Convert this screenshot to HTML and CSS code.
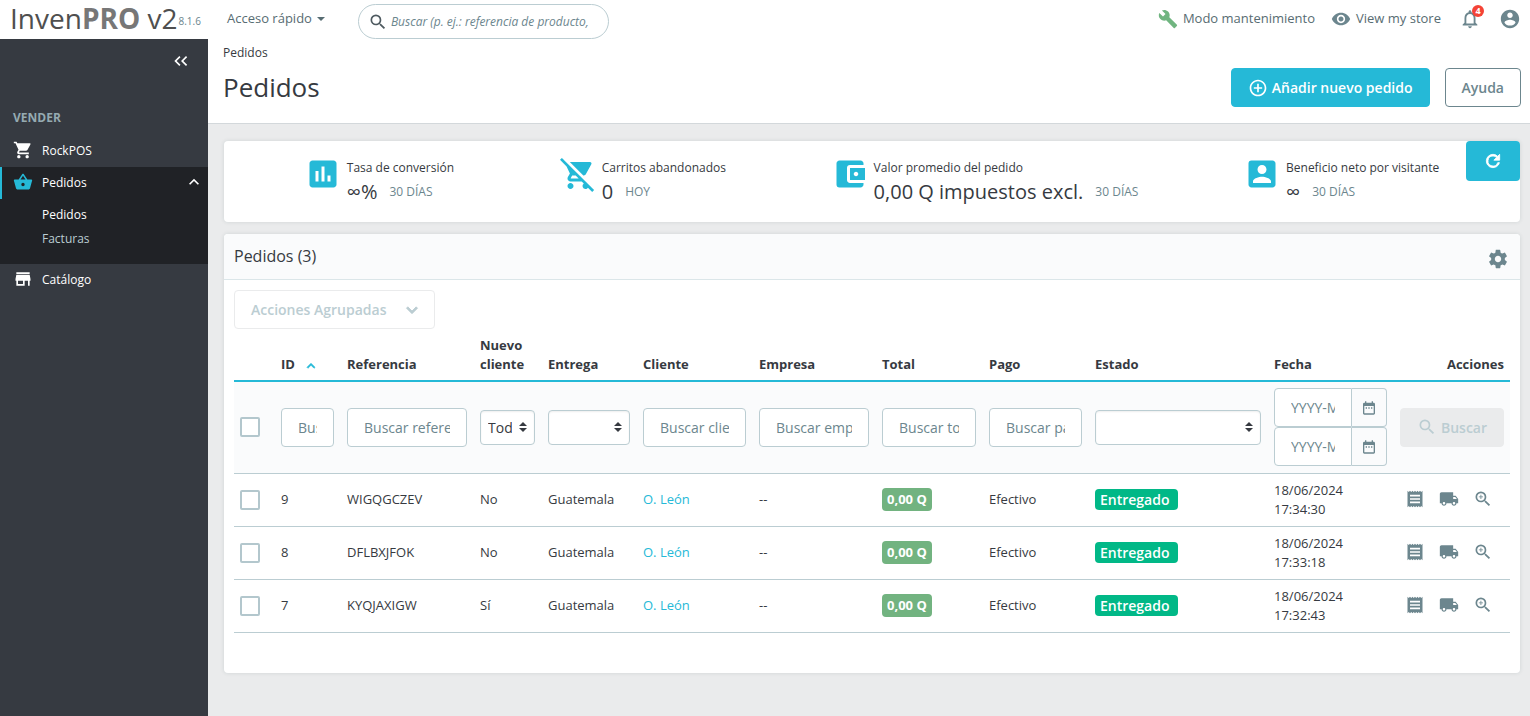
FILE: index.html
```html
<!DOCTYPE html>
<html lang="es">
<head>
<meta charset="utf-8">
<title>Pedidos - InvenPRO v2</title>
<link rel="stylesheet" href="styles.css">
</head>
<body>
<svg class="sprite" aria-hidden="true">
  <symbol id="i-search" viewBox="0 0 24 24"><path d="M15.5 14h-.79l-.28-.27A6.47 6.47 0 0 0 16 9.5 6.5 6.5 0 1 0 9.5 16c1.61 0 3.09-.59 4.23-1.57l.27.28v.79l5 4.99L20.490 19l-4.990-5zm-6 0C7.010 14 5 11.990 5 9.500S7.010 5 9.500 5 14 7.010 14 9.500 11.990 14 9.500 14z"/></symbol>
  <symbol id="i-build" viewBox="0 0 24 24"><path d="M22.700 19l-9.100-9.100c.9-2.300.4-5-1.500-6.900-2-2-5-2.400-7.400-1.300L9 6 6 9 1.600 4.700C.4 7.100.9 10.100 2.900 12.100c1.900 1.900 4.600 2.400 6.900 1.500l9.100 9.100c.4.4 1 .4 1.400 0l2.300-2.300c.5-.4.5-1.100.1-1.400z"/></symbol>
  <symbol id="i-eye" viewBox="0 0 24 24"><path d="M12 4.500C7 4.500 2.730 7.610 1 12c1.730 4.390 6 7.500 11 7.500s9.270-3.110 11-7.500c-1.730-4.390-6-7.500-11-7.500zM12 17c-2.760 0-5-2.240-5-5s2.240-5 5-5 5 2.240 5 5-2.240 5-5 5zm0-8c-1.660 0-3 1.340-3 3s1.340 3 3 3 3-1.340 3-3-1.340-3-3-3z"/></symbol>
  <symbol id="i-bell" viewBox="0 0 24 24"><path d="M12 22c1.100 0 2-.9 2-2h-4c0 1.100.9 2 2 2zm6-6v-5c0-3.070-1.630-5.640-4.500-6.320V4c0-.83-.67-1.500-1.500-1.500s-1.500.67-1.500 1.500v.68C7.640 5.360 6 7.920 6 11v5l-2 2v1h16v-1l-2-2zm-2 1H8v-6c0-2.480 1.510-4.500 4-4.500s4 2.020 4 4.500v6z"/></symbol>
  <symbol id="i-account" viewBox="0 0 24 24"><path d="M12 2C6.480 2 2 6.480 2 12s4.480 10 10 10 10-4.480 10-10S17.520 2 12 2zm0 3c1.660 0 3 1.340 3 3s-1.340 3-3 3-3-1.340-3-3 1.340-3 3-3zm0 14.200c-2.500 0-4.710-1.280-6-3.220.03-1.990 4-3.080 6-3.080 1.990 0 5.970 1.090 6 3.080-1.290 1.940-3.500 3.220-6 3.220z"/></symbol>
  <symbol id="i-cart" viewBox="0 0 24 24"><path d="M7 18c-1.100 0-1.990.9-1.990 2S5.900 22 7 22s2-.9 2-2-.9-2-2-2zM1 2v2h2l3.600 7.590-1.350 2.450c-.16.28-.25.61-.25.96 0 1.100.9 2 2 2h12v-2H7.420c-.14 0-.25-.11-.25-.25l.03-.12.9-1.630h7.450c.75 0 1.410-.41 1.750-1.030l3.580-6.490A1 1 0 0 0 20 4H5.210l-.94-2H1zm16 16c-1.100 0-1.990.9-1.990 2s.89 2 1.990 2 2-.9 2-2-.9-2-2-2z"/></symbol>
  <symbol id="i-basket" viewBox="0 0 24 24"><path d="M17.210 9l-4.380-6.560c-.19-.28-.51-.42-.83-.42s-.64.14-.83.430L6.790 9H2c-.55 0-1 .45-1 1 0 .09.01.18.04.27l2.540 9.270c.23.840 1 1.460 1.920 1.460h13c.92 0 1.690-.62 1.930-1.460l2.540-9.270L23 10c0-.55-.45-1-1-1h-4.790zM9 9l3-4.400L15 9H9zm3 8c-1.100 0-2-.9-2-2s.9-2 2-2 2 .9 2 2-.9 2-2 2z"/></symbol>
  <symbol id="i-store" viewBox="0 0 24 24"><path d="M20 4H4v2h16V4zm1 10v-2l-1-5H4l-1 5v2h1v6h10v-6h4v6h2v-6h1zm-9 4H6v-4h6v4z"/></symbol>
  <symbol id="i-up" viewBox="0 0 24 24"><path d="M7.410 15.410L12 10.830l4.590 4.580L18 14l-6-6-6 6z"/></symbol>
  <symbol id="i-down" viewBox="0 0 24 24"><path d="M7.410 8.590L12 13.170l4.590-4.580L18 10l-6 6-6-6z"/></symbol>
  <symbol id="i-collapse" viewBox="0 0 24 24"><path d="M11.400 7.400L10 6l-6 6 6 6 1.400-1.400L6.800 12zM19.400 7.400L18 6l-6 6 6 6 1.400-1.400-4.600-4.600z"/></symbol>
  <symbol id="i-add" viewBox="0 0 24 24"><path d="M13 7h-2v4H7v2h4v4h2v-4h4v-2h-4V7zm-1-5C6.480 2 2 6.480 2 12s4.480 10 10 10 10-4.480 10-10S17.520 2 12 2zm0 18c-4.410 0-8-3.590-8-8s3.590-8 8-8 8 3.590 8 8-3.590 8-8 8z"/></symbol>
  <symbol id="i-chart" viewBox="0 0 24 24"><path d="M19 3H5c-1.100 0-2 .9-2 2v14c0 1.100.9 2 2 2h14c1.100 0 2-.9 2-2V5c0-1.100-.9-2-2-2zM9 17H7v-7h2v7zm4 0h-2V7h2v10zm4 0h-2v-4h2v4z"/></symbol>
  <symbol id="i-cartoff" viewBox="0 0 24 24"><path d="M22.730 22.730L2.770 2.770 2 2l-.73-.73L0 2.540l4.390 4.390 2.210 4.660-1.350 2.450c-.16.28-.25.61-.25.96 0 1.100.9 2 2 2h7.460l1.380 1.380A2 2 0 0 0 17 22c.67 0 1.260-.33 1.620-.84L21.460 24l1.270-1.270zM7.420 15c-.14 0-.25-.11-.25-.25l.03-.12.9-1.630h2.360l2 2H7.420zm8.130-2c.75 0 1.410-.41 1.750-1.030l3.580-6.490A1 1 0 0 0 20 4H6.540l9.010 9zM7 18c-1.100 0-1.990.9-1.990 2S5.900 22 7 22s2-.9 2-2-.9-2-2-2z"/></symbol>
  <symbol id="i-wallet" viewBox="0 0 24 24"><path d="M21 18v1c0 1.100-.9 2-2 2H5a2 2 0 0 1-2-2V5c0-1.100.89-2 2-2h14c1.100 0 2 .9 2 2v1h-9a2 2 0 0 0-2 2v8c0 1.100.89 2 2 2h9zm-9-2h10V8H12v8zm4-2.500c-.83 0-1.500-.67-1.500-1.500s.67-1.500 1.500-1.500 1.500.67 1.500 1.500-.67 1.500-1.500 1.500z"/></symbol>
  <symbol id="i-person" viewBox="0 0 24 24"><path d="M3 5v14c0 1.100.89 2 2 2h14c1.100 0 2-.9 2-2V5c0-1.100-.9-2-2-2H5a2 2 0 0 0-2 2zm12 4c0 1.660-1.340 3-3 3s-3-1.340-3-3 1.340-3 3-3 3 1.340 3 3zm-9 8c0-2 4-3.100 6-3.100s6 1.100 6 3.100v1H6v-1z"/></symbol>
  <symbol id="i-refresh" viewBox="0 0 24 24"><path d="M17.650 6.350A7.960 7.960 0 0 0 12 4a8 8 0 1 0 7.730 10h-2.080A6 6 0 1 1 12 6c1.660 0 3.140.69 4.220 1.780L13 11h7V4l-2.350 2.350z"/></symbol>
  <symbol id="i-gear" viewBox="0 0 24 24"><path d="M19.430 12.980c.04-.32.07-.64.07-.98s-.03-.66-.07-.98l2.110-1.650c.19-.15.24-.42.12-.64l-2-3.460c-.12-.22-.39-.3-.61-.22l-2.490 1c-.52-.4-1.080-.73-1.690-.98l-.38-2.650A.49.49 0 0 0 14 2h-4c-.25 0-.46.18-.49.42l-.38 2.650c-.61.25-1.170.59-1.690.98l-2.490-1c-.23-.09-.49 0-.61.22l-2 3.460c-.13.22-.07.49.12.64l2.110 1.650c-.04.32-.07.65-.07.98s.03.66.07.98l-2.110 1.650c-.19.15-.24.42-.12.64l2 3.460c.12.22.39.3.61.22l2.490-1c.52.4 1.080.73 1.690.98l.38 2.650c.03.24.24.42.49.42h4c.25 0 .46-.18.49-.42l.38-2.650c.61-.25 1.170-.59 1.690-.98l2.490 1c.23.09.49 0 .61-.22l2-3.460c.12-.22.07-.49-.12-.64l-2.110-1.650zM12 15.500c-1.930 0-3.500-1.570-3.500-3.500s1.570-3.500 3.500-3.500 3.500 1.570 3.500 3.500-1.570 3.500-3.500 3.500z"/></symbol>
  <symbol id="i-calendar" viewBox="0 0 24 24"><path d="M9 11H7v2h2v-2zm4 0h-2v2h2v-2zm4 0h-2v2h2v-2zm2-7h-1V2h-2v2H8V2H6v2H5a2 2 0 0 0-2 2v14c0 1.100.89 2 2 2h14c1.100 0 2-.9 2-2V6c0-1.100-.9-2-2-2zm0 16H5V9h14v11z"/></symbol>
  <symbol id="i-receipt" viewBox="0 0 24 24"><path d="M18 17H6v-2h12v2zm0-4H6v-2h12v2zm0-4H6V7h12v2zM3 22l1.500-1.500L6 22l1.500-1.500L9 22l1.500-1.500L12 22l1.500-1.500L15 22l1.500-1.500L18 22l1.500-1.500L21 22V2l-1.500 1.500L18 2l-1.500 1.500L15 2l-1.500 1.500L12 2l-1.500 1.500L9 2 7.500 3.500 6 2 4.500 3.500 3 2v20z"/></symbol>
  <symbol id="i-truck" viewBox="0 0 24 24"><path d="M20 8h-3V4H3c-1.100 0-2 .9-2 2v11h2c0 1.660 1.340 3 3 3s3-1.340 3-3h6c0 1.660 1.340 3 3 3s3-1.340 3-3h2v-5l-3-4zM6 18.500c-.83 0-1.500-.67-1.500-1.500s.67-1.500 1.500-1.500 1.500.67 1.500 1.500-.67 1.500-1.500 1.500zm13.500-9l1.960 2.500H17V9.500h2.500zm-1.500 9c-.83 0-1.500-.67-1.500-1.500s.67-1.500 1.500-1.500 1.500.67 1.500 1.500-.67 1.500-1.500 1.500z"/></symbol>
  <symbol id="i-zoom" viewBox="0 0 24 24"><path d="M15.500 14h-.79l-.28-.27A6.470 6.470 0 0 0 16 9.500 6.500 6.500 0 1 0 9.500 16c1.610 0 3.090-.59 4.230-1.570l.27.28v.79l5 4.990L20.490 19l-4.990-5zm-6 0C7.010 14 5 11.990 5 9.500S7.010 5 9.500 5 14 7.010 14 9.500 11.990 14 9.500 14zM12 10h-2v2H9v-2H7V9h2V7h1v2h2v1z"/></symbol>
</svg>

<header class="topbar">
  <div class="brand">
    <a class="logo" href="#">Inven<b>PRO</b> v2</a>
    <span class="version">8.1.6</span>
  </div>
  <button class="quick" type="button">Acceso rápido<span class="caret"></span></button>
  <form class="search" role="search">
    <svg class="icon icon-20"><use href="#i-search"/></svg>
    <input type="text" aria-label="Buscar" placeholder="Buscar (p. ej.: referencia de producto,">
  </form>
  <nav class="tools">
    <a class="tool maintenance" href="#"><svg class="icon icon-20"><use href="#i-build"/></svg>Modo mantenimiento</a>
    <a class="tool" href="#"><svg class="icon icon-20"><use href="#i-eye"/></svg>View my store</a>
    <button class="bell" type="button" aria-label="Notificaciones"><svg class="icon icon-22"><use href="#i-bell"/></svg><span class="count">4</span></button>
    <button class="account" type="button" aria-label="Cuenta"><svg class="icon icon-22"><use href="#i-account"/></svg></button>
  </nav>
</header>

<div class="shell">
  <nav class="sidebar">
    <button class="collapse" type="button" aria-label="Contraer menú"><svg class="icon icon-20"><use href="#i-collapse"/></svg></button>
    <h2 class="section">VENDER</h2>
    <a class="item" href="#"><svg class="icon icon-20"><use href="#i-cart"/></svg>RockPOS</a>
    <div class="group">
      <a class="item active" href="#"><svg class="icon icon-20"><use href="#i-basket"/></svg>Pedidos<svg class="icon icon-20 chevron"><use href="#i-up"/></svg></a>
      <a class="sub current" href="#">Pedidos</a>
      <a class="sub" href="#">Facturas</a>
    </div>
    <a class="item" href="#"><svg class="icon icon-20"><use href="#i-store"/></svg>Catálogo</a>
  </nav>

  <main class="main">
    <header class="page-head">
      <div>
        <a class="crumb" href="#">Pedidos</a>
        <h1 class="title">Pedidos</h1>
      </div>
      <div class="page-actions">
        <button class="btn primary" type="button"><svg class="icon icon-20"><use href="#i-add"/></svg>Añadir nuevo pedido</button>
        <button class="btn outline" type="button">Ayuda</button>
      </div>
    </header>

    <div class="content">
      <section class="card kpis">
        <div class="kpi"><svg class="icon icon-36"><use href="#i-chart"/></svg><div><div class="kpi-label">Tasa de conversión</div><div class="kpi-line"><span class="kpi-value">∞%</span><span class="kpi-note">30 DÍAS</span></div></div></div>
        <div class="kpi"><svg class="icon icon-36"><use href="#i-cartoff"/></svg><div><div class="kpi-label">Carritos abandonados</div><div class="kpi-line"><span class="kpi-value">0</span><span class="kpi-note">HOY</span></div></div></div>
        <div class="kpi"><svg class="icon icon-36"><use href="#i-wallet"/></svg><div><div class="kpi-label">Valor promedio del pedido</div><div class="kpi-line"><span class="kpi-value">0,00 Q impuestos excl.</span><span class="kpi-note">30 DÍAS</span></div></div></div>
        <div class="kpi"><svg class="icon icon-36"><use href="#i-person"/></svg><div><div class="kpi-label">Beneficio neto por visitante</div><div class="kpi-line"><span class="kpi-value">∞</span><span class="kpi-note">30 DÍAS</span></div></div></div>
        <button class="refresh" type="button" aria-label="Actualizar"><svg class="icon icon-20 bold"><use href="#i-refresh"/></svg></button>
      </section>

      <section class="card">
        <header class="card-head">
          <h3 class="card-title">Pedidos (3)</h3>
          <button class="gear" type="button" aria-label="Ajustes"><svg class="icon icon-22"><use href="#i-gear"/></svg></button>
        </header>
        <div class="card-body">
          <button class="btn bulk" type="button" disabled>Acciones Agrupadas<svg class="icon icon-22 bold"><use href="#i-down"/></svg></button>
          <table class="grid">
            <colgroup>
              <col class="c-check"><col class="c-id"><col class="c-ref"><col class="c-new"><col class="c-delivery"><col class="c-client"><col class="c-company"><col class="c-total"><col class="c-payment"><col class="c-status"><col class="c-date"><col class="c-actions">
            </colgroup>
            <thead>
              <tr class="heads">
                <th></th><th>ID<svg class="icon icon-16 sort bold"><use href="#i-up"/></svg></th><th>Referencia</th><th>Nuevo cliente</th><th>Entrega</th><th>Cliente</th><th>Empresa</th><th>Total</th><th>Pago</th><th>Estado</th><th>Fecha</th><th class="right">Acciones</th>
              </tr>
              <tr class="filters">
                <td><input class="check" type="checkbox" aria-label="Seleccionar todo"></td>
                <td><input class="field" type="text" aria-label="ID" placeholder="Buscar ID"></td>
                <td><input class="field" type="text" aria-label="Referencia" placeholder="Buscar referencia"></td>
                <td><select class="select" aria-label="Nuevo cliente"><option>Todos</option><option>Sí</option><option>No</option></select></td>
                <td><select class="select" aria-label="Entrega"><option></option><option>Guatemala</option></select></td>
                <td><input class="field" type="text" aria-label="Cliente" placeholder="Buscar cliente"></td>
                <td><input class="field" type="text" aria-label="Empresa" placeholder="Buscar empresa"></td>
                <td><input class="field" type="text" aria-label="Total" placeholder="Buscar total"></td>
                <td><input class="field" type="text" aria-label="Pago" placeholder="Buscar pago"></td>
                <td><select class="select" aria-label="Estado"><option></option><option>Entregado</option></select></td>
                <td>
                  <div class="date"><input class="field" type="text" aria-label="Desde" placeholder="YYYY-MM-DD"><span class="addon"><svg class="icon icon-16"><use href="#i-calendar"/></svg></span></div>
                  <div class="date"><input class="field" type="text" aria-label="Hasta" placeholder="YYYY-MM-DD"><span class="addon"><svg class="icon icon-16"><use href="#i-calendar"/></svg></span></div>
                </td>
                <td><button class="btn find" type="button" disabled><svg class="icon icon-20"><use href="#i-search"/></svg>Buscar</button></td>
              </tr>
            </thead>
            <tbody>
              <tr>
                <td><input class="check" type="checkbox" aria-label="Pedido 9"></td><td>9</td><td>WIGQGCZEV</td><td>No</td><td>Guatemala</td><td><a class="link" href="#">O. León</a></td><td>--</td><td><span class="badge">0,00 Q</span></td><td>Efectivo</td><td><span class="status">Entregado</span></td><td>18/06/2024 17:34:30</td>
                <td><div class="acts"><a href="#" aria-label="Factura"><svg class="icon icon-20"><use href="#i-receipt"/></svg></a><a href="#" aria-label="Envío"><svg class="icon icon-20"><use href="#i-truck"/></svg></a><a href="#" aria-label="Ver"><svg class="icon icon-20"><use href="#i-zoom"/></svg></a></div></td>
              </tr>
              <tr>
                <td><input class="check" type="checkbox" aria-label="Pedido 8"></td><td>8</td><td>DFLBXJFOK</td><td>No</td><td>Guatemala</td><td><a class="link" href="#">O. León</a></td><td>--</td><td><span class="badge">0,00 Q</span></td><td>Efectivo</td><td><span class="status">Entregado</span></td><td>18/06/2024 17:33:18</td>
                <td><div class="acts"><a href="#" aria-label="Factura"><svg class="icon icon-20"><use href="#i-receipt"/></svg></a><a href="#" aria-label="Envío"><svg class="icon icon-20"><use href="#i-truck"/></svg></a><a href="#" aria-label="Ver"><svg class="icon icon-20"><use href="#i-zoom"/></svg></a></div></td>
              </tr>
              <tr>
                <td><input class="check" type="checkbox" aria-label="Pedido 7"></td><td>7</td><td>KYQJAXIGW</td><td>Sí</td><td>Guatemala</td><td><a class="link" href="#">O. León</a></td><td>--</td><td><span class="badge">0,00 Q</span></td><td>Efectivo</td><td><span class="status">Entregado</span></td><td>18/06/2024 17:32:43</td>
                <td><div class="acts"><a href="#" aria-label="Factura"><svg class="icon icon-20"><use href="#i-receipt"/></svg></a><a href="#" aria-label="Envío"><svg class="icon icon-20"><use href="#i-truck"/></svg></a><a href="#" aria-label="Ver"><svg class="icon icon-20"><use href="#i-zoom"/></svg></a></div></td>
              </tr>
            </tbody>
          </table>
        </div>
      </section>
    </div>
  </main>
</div>
</body>
</html>
```

FILE: styles.css
```css
* { box-sizing: border-box; }

body {
  margin: 0;
  min-height: 100vh;
  display: flex;
  flex-direction: column;
  background: #eaebec;
  color: #363a41;
  font: 13px/19px "Open Sans", "Noto Sans", sans-serif;
}

a { color: inherit; text-decoration: none; }
button, input, select { font: inherit; color: inherit; margin: 0; }
button { padding: 0; border: 0; background: none; }
h1, h2, h3 { margin: 0; }

.sprite { position: absolute; width: 0; height: 0; }
.icon { display: block; flex: none; fill: currentColor; }
.bold { stroke: currentColor; stroke-width: 1; }
.icon-16 { width: 16px; height: 16px; }
.icon-20 { width: 20px; height: 20px; }
.icon-22 { width: 22px; height: 22px; }
.icon-36 { width: 36px; height: 36px; }

/* Top bar */
.topbar { display: flex; align-items: center; height: 39px; background: #fff; color: #576c72; }
.brand { display: flex; align-items: center; gap: 1px; width: 208px; padding-left: 10px; white-space: nowrap; }
.logo { padding-bottom: 3px; color: #4f4f4f; font: 28px/36px "Open Sans", "Noto Sans", sans-serif; }
.logo b { color: #777; }
.version { padding-top: 4px; color: #6c868e; font-size: 10px; }
.quick { display: flex; align-items: center; gap: 5px; margin-left: 19px; padding-bottom: 2px; }
.caret { border: 4px solid transparent; border-top-color: currentColor; border-bottom: 0; }
.search {
  display: flex;
  align-items: center;
  align-self: flex-end;
  gap: 3px;
  width: 251px;
  height: 35px;
  margin-left: 33px;
  padding: 0 16px 0 9px;
  border: 1px solid #bbcdd2;
  border-radius: 18px;
  color: #4e5a60;
}
.search input { flex: 1; min-width: 0; padding: 0; border: 0; outline: 0; background: none; font-size: 12px; font-style: italic; }
::placeholder { color: #6c868e; opacity: 1; }
.tools { display: flex; align-items: center; gap: 16px; margin-left: auto; padding: 0 9px 2px 0; }
.tool { display: flex; align-items: center; gap: 5px; }
.tool .icon, .bell, .account { color: #6c868e; }
.maintenance .icon { color: #70b580; }
.bell { position: relative; margin: 0 2px; }
.count {
  position: absolute;
  top: -3px;
  right: -3px;
  width: 12px;
  height: 12px;
  border-radius: 6px;
  background: #f44336;
  color: #fff;
  font: 700 9px/12px "Open Sans", sans-serif;
  text-align: center;
}

/* Sidebar */
.shell { display: flex; flex: 1; }
.sidebar { flex: none; width: 208px; padding-top: 12px; background: #363a41; color: #fff; font-size: 12px; }
.collapse { display: block; margin: 0 17px 0 auto; color: #fff; }
.section { padding: 37px 13px 7px; color: #95aab1; font-size: 12px; line-height: 20px; font-weight: 700; }
.item { display: flex; align-items: center; gap: 9px; height: 32px; padding: 0 0 2px 13px; }
.group { padding-bottom: 13px; background: #202226; }
.group .item { margin-bottom: 4px; }
.active { padding-left: 11px; border-left: 2px solid #25b9d7; }
.active .icon { color: #25b9d7; }
.active .chevron { margin: 0 4px 0 auto; color: #fff; }
.sub { display: block; padding-left: 42px; color: #bbcdd2; line-height: 24px; }
.current { color: #fff; }

/* Page header */
.main { flex: 1; min-width: 0; }
.page-head { display: flex; justify-content: space-between; padding: 4px 9px 16px 15px; border-bottom: 1px solid #d3d8db; background: #fff; }
.crumb { display: block; font-size: 12px; }
.title { padding: 7px 0 2px; font-size: 26px; line-height: 36px; font-weight: 400; }
.page-actions { display: flex; align-items: flex-end; gap: 15px; }
.btn {
  display: flex;
  align-items: center;
  gap: 4px;
  height: 39px;
  padding: 0 16px;
  border: 1px solid;
  border-radius: 4px;
  font-size: 14px;
  font-weight: 600;
  white-space: nowrap;
}
.primary { border-color: #25b9d7; background: #25b9d7; color: #fff; }
.outline { border-color: #6c868e; color: #6c868e; }

/* Cards */
.content { display: grid; gap: 12px; padding: 17px 10px 43px 16px; }
.card { min-width: 0; border-radius: 4px; background: #fff; box-shadow: 0 0 4px rgba(0, 60, 60, .12); }
.kpis { position: relative; display: flex; justify-content: space-around; padding: 15px 28px 17px; }
.kpi { display: flex; gap: 6px; color: #25b9d7; white-space: nowrap; }
.kpi-label { padding-top: 2px; color: #363a41; font-size: 12px; }
.kpi-line { display: flex; align-items: center; gap: 12px; height: 28px; color: #363a41; }
.kpi-value { font-size: 20px; }
.kpi-note { color: #6c868e; font-size: 12px; }
.refresh { position: absolute; top: 0; right: 0; display: grid; place-items: center; width: 54px; height: 40px; border-radius: 4px; background: #25b9d7; color: #fff; }
.card-head { display: flex; align-items: center; justify-content: space-between; height: 46px; padding: 0 11px 0 10px; border-bottom: 1px solid #dbe6e9; border-radius: 4px 4px 0 0; background: #fafbfc; }
.card-title { font-size: 16px; font-weight: 500; }
.gear { padding-top: 4px; color: #6c868e; }
.card-body { padding: 10px 10px 40px; }
.bulk { gap: 15px; padding: 0 11px 0 16px; border-color: #eaebec; color: #bbcdd2; }

/* Orders table */
.grid { width: 100%; margin-top: 4px; border-collapse: collapse; table-layout: fixed; }
.c-check { width: 41px; }
.c-id { width: 66px; }
.c-ref { width: 133px; }
.c-new { width: 68px; }
.c-delivery { width: 95px; }
.c-client { width: 116px; }
.c-company { width: 123px; }
.c-total { width: 107px; }
.c-payment { width: 106px; }
.c-status { width: 179px; }
.c-date { width: 126px; }
.c-actions { width: 116px; }
.grid th, .grid td { padding: 6px 7px 6px 6px; text-align: left; }
.grid th { padding-top: 3px; border-bottom: 2px solid #25b9d7; font-weight: 700; vertical-align: bottom; }
.grid td { height: 53px; border-bottom: 1px solid #bbcdd2; }
.grid th:last-child, .grid td:last-child { padding-right: 6px; }
.grid .right { text-align: right; }
.filters { background: #fafbfc; }
.grid .filters td { height: 92px; }
.sort { display: inline-block; margin-left: 8px; color: #25b9d7; vertical-align: middle; }
.check { display: block; width: 20px; height: 20px; appearance: none; border: 2px solid #b3c7cd; border-radius: 2px; background: #fff; }
.field { display: block; width: 100%; height: 39px; padding: 0 16px; border: 1px solid #bbcdd2; border-radius: 4px; background: #fff; font-size: 14px; }
.select {
  display: block;
  width: 100%;
  height: 35px;
  padding: 0 22px 0 7px;
  appearance: none;
  border: 1px solid #bbcdd2;
  border-radius: 4px;
  background: #fff url("data:image/svg+xml,%3Csvg xmlns='http://www.w3.org/2000/svg' viewBox='0 0 8 10'%3E%3Cpath fill='%23363a41' d='M4 0L0 4h8zM0 6h8l-4 4z'/%3E%3C/svg%3E") no-repeat right 7px center / 8px 10px;
  box-shadow: inset 0 1px 2px rgba(0, 0, 0, .07);
  font-size: 14px;
}
.date { display: flex; }
.date .field { flex: 1; min-width: 0; border-radius: 4px 0 0 4px; }
.addon { display: grid; place-items: center; width: 35px; border: 1px solid #bbcdd2; border-left: 0; border-radius: 0 4px 4px 0; background: #fafbfc; color: #6c868e; }
.find { width: 100%; justify-content: center; border-color: #eaebec; background: #eaebec; color: #bbcdd2; }
.link { color: #25b9d7; }
.badge, .status { display: inline-block; padding: 0 5px; border-radius: 4px; color: #fff; font-weight: 700; vertical-align: middle; }
.badge { background: #72b380; line-height: 23px; }
.status { padding-right: 8px; background: #01b887; font-size: 14px; font-weight: 600; line-height: 21px; }
.acts { display: flex; align-items: center; justify-content: flex-end; gap: 14px; padding: 0 11px 2px 0; color: #6c868e; }
```
